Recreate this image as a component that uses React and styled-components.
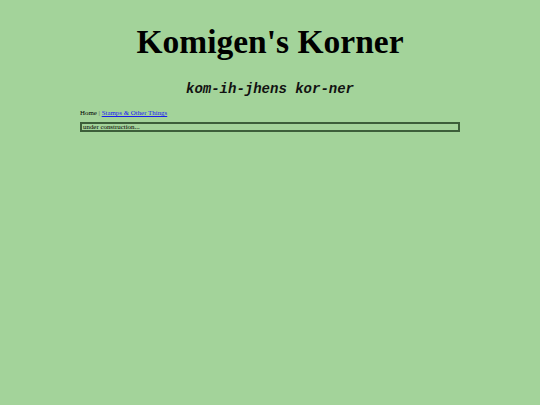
import React from "react";
import styled, { createGlobalStyle } from "styled-components";

const GlobalStyle = createGlobalStyle`
  html, body {
    margin: 0;
    padding: 0;
    background: #a3d39a;
  }
  body {
    min-height: 405px;
    font-family: "Liberation Serif", "Times New Roman", serif;
    color: #000;
  }
`;

const Page = styled.div`
  padding-top: 22px;
`;

const Title = styled.h1`
  margin: 0;
  text-align: center;
  font-size: 33.5px;
  line-height: 40px;
  font-weight: bold;
`;

const Subtitle = styled.div`
  margin-top: 19px;
  text-align: center;
  font-family: "Liberation Mono", "Courier New", monospace;
  font-style: italic;
  font-weight: bold;
  font-size: 14px;
  line-height: 16px;
  color: #111;
`;

const Content = styled.div`
  width: 380px;
  margin: 0 auto;
  font-size: 6.9px;
`;

const Nav = styled.div`
  margin-top: 12px;
  line-height: 8px;
  a {
    color: #1a1aee;
  }
`;

const Sep = styled.span`
  color: #555;
`;

const Notice = styled.div`
  margin-top: 5px;
  height: 6px;
  line-height: 6px;
  padding-left: 1px;
  border: 2px solid #3d5e3a;
`;

const App = () => {
  return (
    <Page>
      <GlobalStyle />
      <Title>Komigen's Korner</Title>
      <Subtitle>kom-ih-jhens kor-ner</Subtitle>

      <Content>
        <Nav>
          Home <Sep>|</Sep> <a href="#stamps">Stamps &amp; Other Things</a>
        </Nav>
        <Notice>under construction...</Notice>
      </Content>
    </Page>
  );
};

export default App;
